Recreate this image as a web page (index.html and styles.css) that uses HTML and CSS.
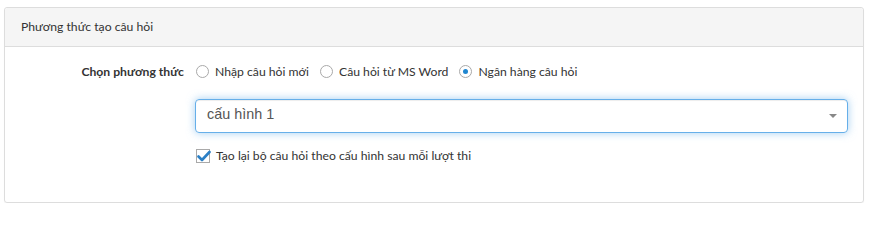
FILE: index.html
```html
<!DOCTYPE html>
<html>
<head>
<meta charset="utf-8">
<link rel="stylesheet" href="styles.css">
</head>
<body>
<div class="panel">
  <div class="panel-heading">Phương thức tạo câu hỏi</div>
  <div class="panel-body">
    <div class="row">
      <div class="label">Chọn phương thức</div>
      <div class="options">
        <label class="opt"><span class="radio"></span><span>Nhập câu hỏi mới</span></label>
        <label class="opt"><span class="radio"></span><span>Câu hỏi từ MS Word</span></label>
        <label class="opt"><span class="radio checked"></span><span>Ngân hàng câu hỏi</span></label>
      </div>
    </div>
    <div class="row row-select">
      <div class="label"></div>
      <div class="select">
        <span class="select-text">cấu hình 1</span>
        <span class="caret"></span>
      </div>
    </div>
    <div class="row row-check">
      <div class="label"></div>
      <label class="opt">
        <span class="checkbox"><svg width="14" height="12" viewBox="0 0 14 12"><path d="M1.5 6.5 L5 10 L12.5 2" fill="none" stroke="#2b7fc5" stroke-width="2.6" stroke-linecap="round" stroke-linejoin="round"/></svg></span>
        <span>Tạo lại bộ câu hỏi theo cấu hình sau mỗi lượt thi</span>
      </label>
    </div>
  </div>
</div>
</body>
</html>
```
FILE: styles.css
```css
html, body {
  margin: 0;
  padding: 0;
  background: #fff;
}
body {
  padding: 7px 6px 0 4px;
  font-family: Lato, "Noto Sans", sans-serif;
  font-size: 12.2px;
  color: #333;
}
.panel {
  border: 1px solid #dddddd;
  border-radius: 3px;
  height: 196px;
  box-sizing: border-box;
  box-shadow: 0 1px 1px rgba(0,0,0,0.05);
}
.panel-heading {
  background: #f5f5f5;
  border-bottom: 1px solid #dddddd;
  height: 39px;
  box-sizing: border-box;
  padding: 11px 16px 0;
  color: #333;
  border-radius: 3px 3px 0 0;
}
.panel-body {
  padding: 17px 15px 0 0;
}
.row {
  display: flex;
  align-items: center;
}
.label {
  width: 190px;
  flex: none;
  text-align: right;
  font-weight: bold;
  padding-right: 11px;
  box-sizing: border-box;
}
.options {
  display: flex;
  gap: 11px;
  margin-left: 1px;
}
.opt {
  display: flex;
  align-items: center;
  gap: 6px;
}
.radio {
  width: 13px;
  height: 13px;
  border: 1px solid #a9a9a9;
  border-radius: 50%;
  box-sizing: border-box;
  background: #fff;
  display: flex;
  align-items: center;
  justify-content: center;
}
.radio.checked::after {
  content: "";
  width: 5px;
  height: 5px;
  border-radius: 50%;
  background: #1f86d0;
}
.row-select {
  margin-top: 20px;
}
.select {
  flex: 1;
  height: 34px;
  box-sizing: border-box;
  border: 1px solid #66afe9;
  border-radius: 4px;
  box-shadow: inset 0 1px 1px rgba(0,0,0,0.075), 0 0 8px rgba(102,175,233,0.6);
  display: flex;
  align-items: center;
  justify-content: space-between;
  padding: 0 10px 0 11px;
}
.select-text {
  font-family: "Liberation Sans", Arial, sans-serif;
  font-size: 14.4px;
  color: #555;
  margin-top: -5px;
}
.caret {
  width: 0;
  height: 0;
  border-left: 4px solid transparent;
  border-right: 4px solid transparent;
  border-top: 4px solid #888;
}
.row-check {
  margin-top: 15px;
}
.row-check .opt {
  margin-left: 1px;
}
.checkbox {
  width: 14px;
  height: 14px;
  border: 1px solid #a9a9a9;
  box-sizing: border-box;
  background: #fff;
  position: relative;
  display: block;
}
.checkbox svg {
  position: absolute;
  left: 0;
  top: 0;
}
```
